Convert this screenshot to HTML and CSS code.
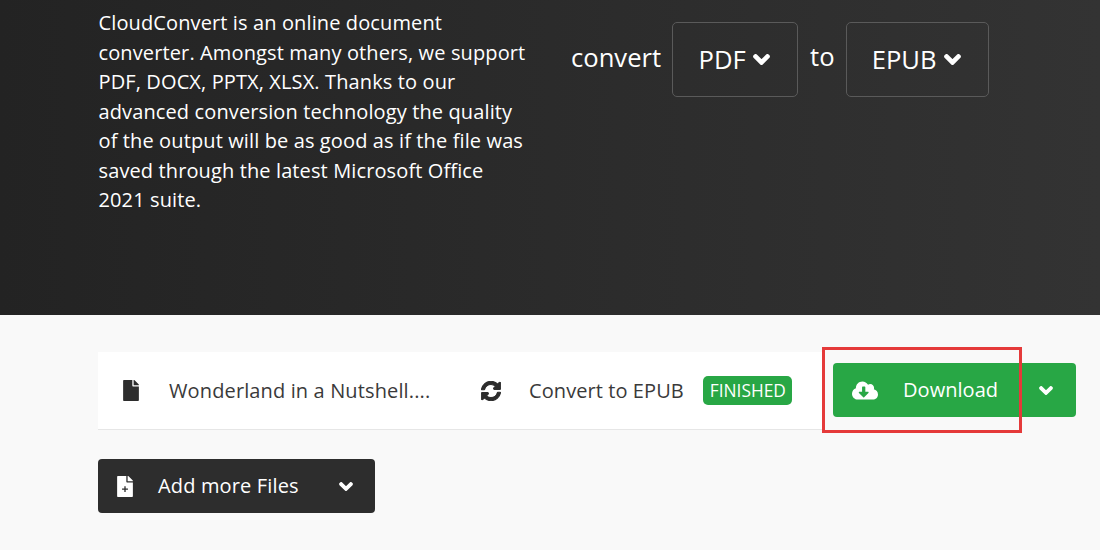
FILE: index.html
```html
<!DOCTYPE html>
<html lang="en">
<head>
<meta charset="utf-8">
<title>CloudConvert</title>
<link rel="stylesheet" href="styles.css">
</head>
<body>
<section class="hero">
  <p class="intro">CloudConvert is an online document converter. Amongst many others, we support PDF, DOCX, PPTX, XLSX. Thanks to our advanced conversion technology the quality of the output will be as good as if the file was saved through the latest Microsoft Office 2021 suite.</p>
  <div class="picker">
    <span class="word word-convert">convert</span>
    <button class="select select-pdf">PDF <svg class="chev" viewBox="-20 95 488 320"><path d="M207.029 381.476L12.686 187.132c-9.373-9.373-9.373-24.569 0-33.941l22.667-22.667c9.357-9.357 24.522-9.375 33.901-.04L224 284.505l154.745-154.021c9.379-9.335 24.544-9.317 33.901.04l22.667 22.667c9.373 9.373 9.373 24.569 0 33.941L240.971 381.476c-9.373 9.372-24.569 9.372-33.942 0z"/></svg></button>
    <span class="word word-to">to</span>
    <button class="select select-epub">EPUB <svg class="chev" viewBox="-20 95 488 320"><path d="M207.029 381.476L12.686 187.132c-9.373-9.373-9.373-24.569 0-33.941l22.667-22.667c9.357-9.357 24.522-9.375 33.901-.04L224 284.505l154.745-154.021c9.379-9.335 24.544-9.317 33.901.04l22.667 22.667c9.373 9.373 9.373 24.569 0 33.941L240.971 381.476c-9.373 9.372-24.569 9.372-33.942 0z"/></svg></button>
  </div>
</section>
<main class="content">
  <div class="job">
    <div class="row">
      <svg class="icon-file" viewBox="0 0 384 512"><path d="M224 136V0H24C10.700 0 0 10.700 0 24v464c0 13.300 10.700 24 24 24h336c13.300 0 24-10.700 24-24V160H248c-13.200 0-24-10.800-24-24zm160-14.100v6.100H256V0h6.100c6.400 0 12.500 2.500 17 7l97.900 98c4.500 4.500 7 10.600 7 16.900z"/></svg>
      <span class="filename">Wonderland in a Nutshell....</span>
      <svg class="icon-sync" viewBox="0 0 512 512"><path d="M370.72 133.28C339.458 104.008 298.888 87.962 255.848 88c-77.458.068-144.328 53.178-162.791 126.85-1.344 5.363-6.122 9.15-11.651 9.15H24.103c-7.498 0-13.194-6.807-11.807-14.176C33.933 94.924 134.813 8 256 8c66.448 0 126.791 26.136 171.315 68.685L463.03 40.97C478.149 25.851 504 36.559 504 57.941V192c0 13.255-10.745 24-24 24H345.941c-21.382 0-32.09-25.851-16.971-40.971l41.75-41.749zM32 296h134.059c21.382 0 32.09 25.851 16.971 40.971l-41.75 41.75c31.262 29.273 71.835 45.319 114.876 45.28 77.418-.07 144.315-53.144 162.787-126.849 1.344-5.363 6.122-9.15 11.651-9.15h57.304c7.498 0 13.194 6.807 11.807 14.176C478.067 417.076 377.187 504 256 504c-66.448 0-126.791-26.136-171.315-68.685L48.97 471.03C33.851 486.149 8 475.441 8 454.059V320c0-13.255 10.745-24 24-24z"/></svg>
      <span class="task">Convert to EPUB</span>
      <span class="badge">FINISHED</span>
    </div>
    <div class="download">
      <button class="dl-main">
        <svg class="icon-cloud" viewBox="0 0 640 512"><path fill-rule="evenodd" d="M537.6 226.6c4.1-10.7 6.4-22.4 6.4-34.6 0-53-43-96-96-96-19.7 0-38.1 6-53.3 16.2C367 64.2 315.3 32 256 32c-88.4 0-160 71.6-160 160 0 2.7.1 5.4.2 8.1C40.2 219.8 0 273.2 0 336c0 79.5 64.5 144 144 144h368c70.7 0 128-57.3 128-128 0-61.9-44-113.6-102.400-125.400zM404.700 315.300L299.300 420.700c-6.200 6.200-16.400 6.200-22.600 0L171.300 315.300c-10.100-10.100-2.900-27.300 11.300-27.300H248V176c0-8.800 7.200-16 16-16h48c8.800 0 16 7.200 16 16v112h65.400c14.200 0 21.400 17.200 11.300 27.300z"/></svg>
        <span>Download</span>
      </button>
      <button class="dl-more"><svg class="chev chev-small" viewBox="-20 95 488 320"><path d="M207.029 381.476L12.686 187.132c-9.373-9.373-9.373-24.569 0-33.941l22.667-22.667c9.357-9.357 24.522-9.375 33.901-.04L224 284.505l154.745-154.021c9.379-9.335 24.544-9.317 33.901.04l22.667 22.667c9.373 9.373 9.373 24.569 0 33.941L240.971 381.476c-9.373 9.372-24.569 9.372-33.942 0z"/></svg></button>
    </div>
  </div>
  <button class="add">
    <svg class="icon-add" viewBox="0 0 384 512"><path fill-rule="evenodd" d="M224 136V0H24C10.700 0 0 10.700 0 24v464c0 13.300 10.700 24 24 24h336c13.300 0 24-10.700 24-24V160H248c-13.200 0-24-10.800-24-24zM384 121.900v6.100H256V0h6.100c6.400 0 12.500 2.500 17 7l97.900 98c4.500 4.500 7 10.600 7 16.900zM176 248v56h-56v32h56v56h32v-56h56v-32h-56v-56z"/></svg>
    <span class="add-label">Add more Files</span>
    <svg class="chev chev-small" viewBox="-20 95 488 320"><path d="M207.029 381.476L12.686 187.132c-9.373-9.373-9.373-24.569 0-33.941l22.667-22.667c9.357-9.357 24.522-9.375 33.901-.04L224 284.505l154.745-154.021c9.379-9.335 24.544-9.317 33.901.04l22.667 22.667c9.373 9.373 9.373 24.569 0 33.941L240.971 381.476c-9.373 9.372-24.569 9.372-33.942 0z"/></svg>
  </button>
</main>
<div class="highlight"></div>
</body>
</html>
```
FILE: styles.css
```css
* { box-sizing: border-box; }
html, body { margin: 0; height: 550px; overflow: hidden; }
body {
  position: relative;
  background: #f9f9f9;
  font-family: "Open Sans", sans-serif;
  color: #333;
}
button { font-family: inherit; cursor: pointer; }

.hero {
  height: 315px;
  padding: 8px 0 0 98.500px;
  display: flex;
  align-items: flex-start;
  background: linear-gradient(90deg, #232323 0%, #2b2b2b 50%, #333 100%);
  color: #fff;
}
.intro {
  width: 431px;
  margin: 0;
  font-size: 20px;
  letter-spacing: .12px;
  line-height: 29.500px;
}
.picker {
  display: flex;
  align-items: flex-start;
  margin: 14px 0 0 41.500px;
}
.word { font-size: 25.600px; line-height: 35px; }
.word-convert { margin: 18px 11px 0 0; }
.word-to { margin: 17px 11px 0 12px; }
.select {
  height: 75px;
  border: 1px solid #5a5a5a;
  border-radius: 5px;
  background: transparent;
  color: #fff;
  font-size: 25.600px;
  display: flex;
  align-items: center;
  justify-content: center;
  gap: 7px;
  padding: 0 2px 0 0;
}
.select-pdf { width: 126px; }
.select-epub { width: 143px; }
.chev { width: 17px; height: 11px; fill: currentColor; stroke: currentColor; stroke-width: 55; flex: none; }
.chev-small { width: 14px; height: 9px; }

.content { padding: 37px 0 0 98px; }
.job { width: 978px; display: flex; align-items: center; }
.row {
  width: 724px;
  height: 78px;
  display: flex;
  align-items: center;
  background: #fff;
  border-bottom: 1px solid #e6e6e6;
  font-size: 20px;
}
.icon-file { width: 16px; height: 21px; margin-left: 25px; fill: #2d2d2d; flex: none; }
.filename { width: 261px; margin-left: 30px; line-height: 28px; color: #3a3a3a; white-space: nowrap; letter-spacing: .13px; }
.icon-sync { width: 20px; height: 20px; margin-left: 51px; fill: #2d2d2d; stroke: #2d2d2d; stroke-width: 26; flex: none; }
.task { margin-left: 28px; color: #3a3a3a; white-space: nowrap; letter-spacing: .08px; }
.badge {
  margin-left: 19px;
  height: 29px;
  padding: 0 6px 0 7px;
  display: flex;
  align-items: center;
  background: #28a745;
  color: #fff;
  border-radius: 5px;
  font-size: 17.300px;
}
.download { display: flex; height: 54px; margin: 0 0 2px auto; }
.download button {
  border: 0;
  background: #28a745;
  color: #fff;
  display: flex;
  align-items: center;
}
.dl-main {
  width: 189px;
  padding: 0 0 0 19px;
  border-radius: 4px 0 0 4px;
  font-size: 20px;
  letter-spacing: .05px;
  line-height: 26px;
}
.icon-cloud { width: 26px; height: 21px; fill: #fff; margin-right: 25px; flex: none; }
.dl-more {
  width: 54px;
  justify-content: flex-start;
  padding: 0 0 0 17px;
  border-radius: 0 4px 4px 0;
}

.add {
  width: 277px;
  height: 54px;
  margin-top: 29px;
  padding: 0 22px 0 19px;
  display: flex;
  align-items: center;
  border: 0;
  border-radius: 4px;
  background: #2d2d2d;
  color: #fff;
  font-size: 20px;
  letter-spacing: .15px;
}
.icon-add { width: 16px; height: 21px; fill: #fff; flex: none; }
.add-label { margin: -2px 0 0 25px; flex: 1; text-align: left; }

.highlight {
  position: absolute;
  left: 822px;
  top: 347px;
  width: 200px;
  height: 86px;
  border: 3px solid #e53a3a;
}
```
